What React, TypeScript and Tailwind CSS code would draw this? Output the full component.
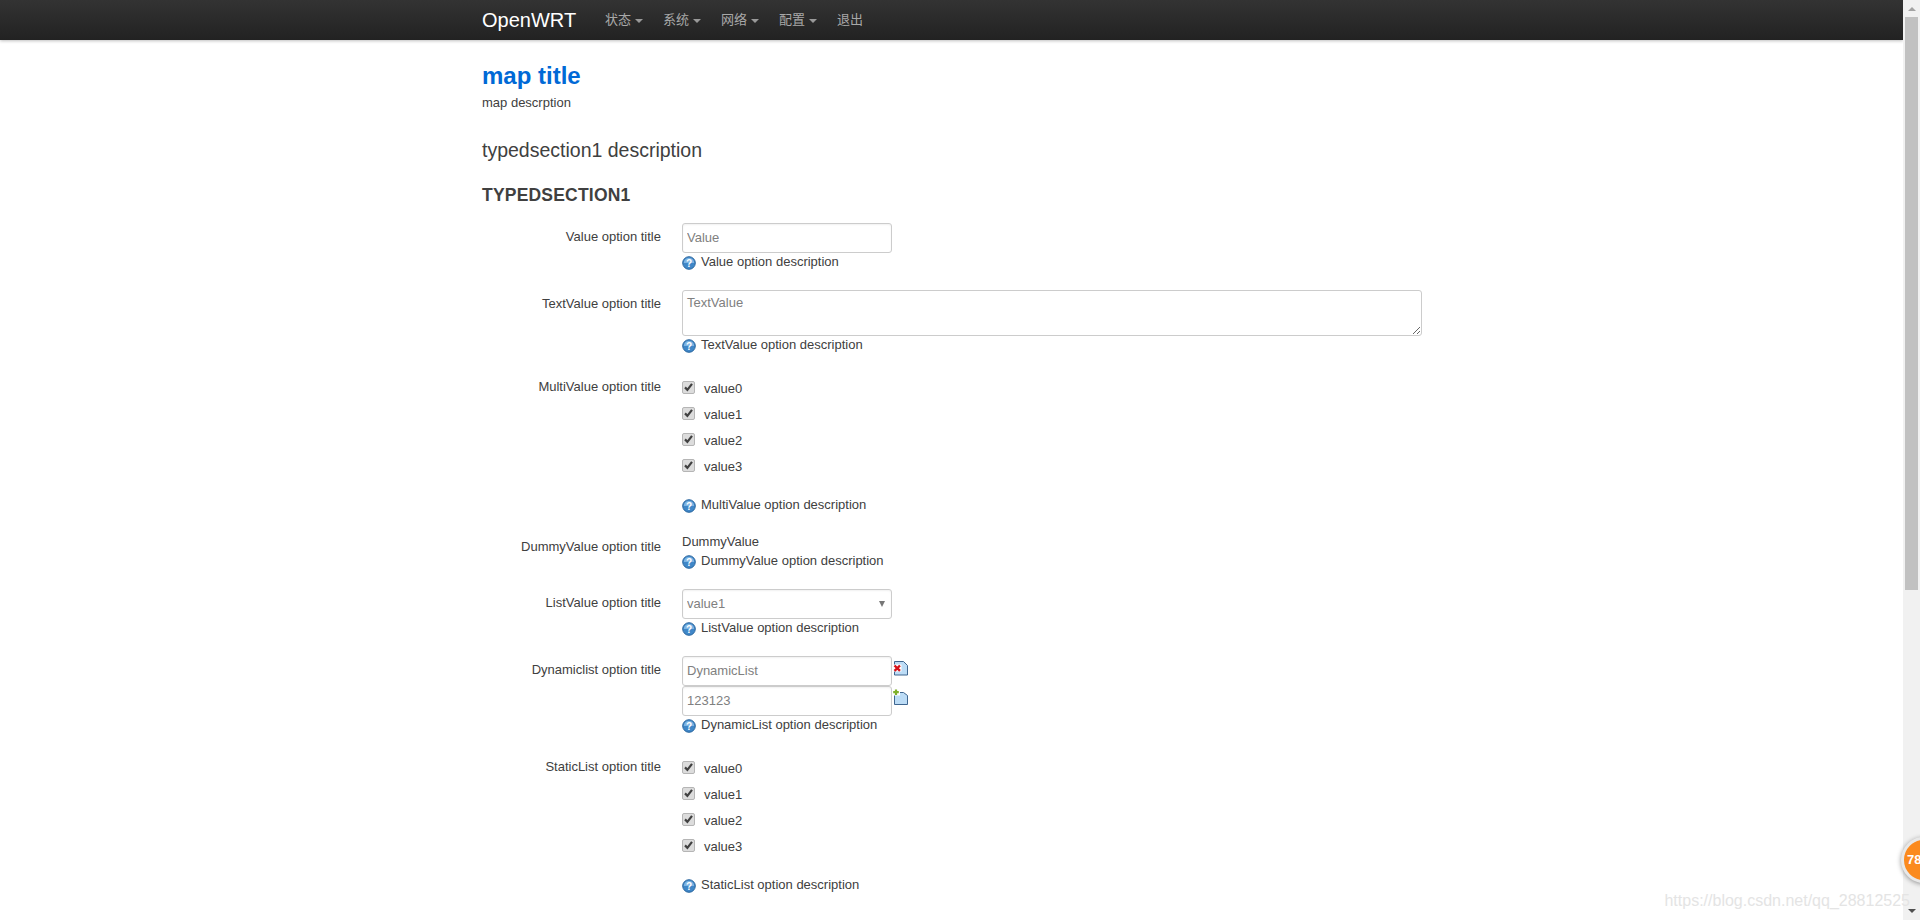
const sans = "font-['Liberation_Sans','Noto_Sans_CJK_SC',sans-serif]";

const HelpIcon = () => (
  <svg width="14" height="14" viewBox="0 0 14 14" className="mt-[1px] shrink-0">
    <circle cx="7" cy="7" r="6.3" fill="#3f87c8" stroke="#2c679f" strokeWidth="1" />
    <path d="M1.8 7a5.2 5.2 0 0 1 10.4 0z" fill="#7db4e3" />
    <text x="7" y="10.6" textAnchor="middle" fontSize="10" fontWeight="700" fill="#fff" fontFamily="Liberation Sans">
      ?
    </text>
  </svg>
);

const Help = ({ text }: { text: string }) => (
  <div className="flex h-[16px] items-center gap-[5px] text-[13px] leading-[16px]">
    <HelpIcon />
    <span>{text}</span>
  </div>
);

const Check = ({ label }: { label: string }) => (
  <div className="flex h-[26px] items-start">
    <span className="mt-[1px] flex h-[13px] w-[13px] items-center justify-center rounded-[2px] border border-[#b5b5b5] bg-[#dcdcdc]">
      <svg width="11" height="11" viewBox="0 0 11 11">
        <path d="M2 5.4 4.4 7.8 9 1.8" fill="none" stroke="#404040" strokeWidth="2.2" />
      </svg>
    </span>
    <span className="ml-[9px] mt-[1px] text-[13px] leading-[16px]">{label}</span>
  </div>
);

const Row = ({ label, labelClass, className, children }: { label: string; labelClass: string; className: string; children: React.ReactNode }) => (
  <div className={`flex ${className}`}>
    <label className={`w-[179px] shrink-0 text-right text-[13px] leading-[16px] ${labelClass}`}>{label}</label>
    <div className="ml-[21px] min-w-0 flex-1">{children}</div>
  </div>
);

const fieldCls =
  "block h-[30px] w-[210px] rounded-[3px] border border-[#ccc] bg-white px-[4px] text-[13px] text-[#808080] placeholder-[#808080] shadow-[inset_0_1px_2px_rgba(0,0,0,0.06)] outline-none";
const inputCls = `${fieldCls} pb-[2px]`;

const DeleteIcon = () => (
  <svg width="15" height="15" viewBox="0 0 15 15">
    <path d="M1.5.5h9l4 4v9.5h-13z" fill="#bcdcf6" stroke="#3f6690" />
    <path d="M0 3.5h8.5v7H0z" fill="#fff" />
    <path d="M1.5 4.5 7 9.8M7 4.5 1.5 9.8" stroke="#d5121a" strokeWidth="2.4" />
  </svg>
);

const AddIcon = () => (
  <svg width="15" height="16" viewBox="0 0 15 16">
    <path d="M1.5 3.5h9l4 3v9h-13z" fill="#bcdcf6" stroke="#3f6690" />
    <path d="M0 0h7v6.5H0z" fill="#fff" />
    <path d="M3 .5v5.5M.2 3.2h5.6" stroke="#7fb02a" strokeWidth="2.2" />
  </svg>
);

const Caret = () => <span className="ml-[4px] mt-[2px] h-0 w-0 border-x-[4px] border-t-[4px] border-x-transparent border-t-[#999]" />;

const navItems = ["状态", "系统", "网络", "配置"];
const values = ["value0", "value1", "value2", "value3"];

export default function App() {
  return (
    <div className={`relative flex h-[920px] overflow-hidden bg-white text-[#404040] ${sans}`}>
      <div className="min-w-0 flex-1">
        <header className="flex h-[40px] items-center bg-gradient-to-b from-[#333] to-[#222] pl-[482px] shadow-[0_1px_3px_rgba(0,0,0,0.25)]">
          <a className="w-[123px] text-[20px] leading-[20px] text-white">OpenWRT</a>
          <nav className="flex items-center text-[13px] text-[#a8a8a8]">
            {navItems.map((item) => (
              <span key={item} className="mr-[14px] flex w-[44px] items-center whitespace-nowrap">
                {item}
                <Caret />
              </span>
            ))}
            <span>退出</span>
          </nav>
        </header>

        <main className="pl-[482px]">
          <h2 className="mt-[22px] text-[24px] font-bold leading-[28px] text-[#0069d6]">map title</h2>
          <p className="mt-[5px] text-[13px] leading-[16px]">map descrption</p>
          <p className="mt-[27px] text-[19.5px] leading-[24px]">typedsection1 description</p>
          <h3 className="mt-[23px] text-[17.5px] font-bold uppercase leading-[20px] tracking-[0.2px]">typedsection1</h3>

          <Row label="Value option title" labelClass="mt-[6px]" className="mt-[18px]">
            <input className={inputCls} placeholder="Value" />
            <div className="mt-[1px]">
              <Help text="Value option description" />
            </div>
          </Row>

          <Row label="TextValue option title" labelClass="mt-[6px]" className="mt-[20px]">
            <textarea
              className="block h-[46px] w-[740px] rounded-[3px] border border-[#ccc] bg-white px-[4px] pb-[2px] pt-[3px] text-[13px] leading-[18px] text-[#808080] placeholder-[#808080] outline-none"
              placeholder="TextValue"
            />
            <div className="mt-[1px]">
              <Help text="TextValue option description" />
            </div>
          </Row>

          <Row label="MultiValue option title" labelClass="" className="mt-[26px]">
            <div className="pt-[1px]">
              {values.map((v) => (
                <Check key={v} label={v} />
              ))}
            </div>
            <div className="mt-[13px]">
              <Help text="MultiValue option description" />
            </div>
          </Row>

          <Row label="DummyValue option title" labelClass="mt-[5px]" className="mt-[21px]">
            <div className="text-[13px] leading-[16px]">DummyValue</div>
            <div className="mt-[3px]">
              <Help text="DummyValue option description" />
            </div>
          </Row>

          <Row label="ListValue option title" labelClass="mt-[6px]" className="mt-[20px]">
            <div className="relative w-[210px]">
              <select className={`${fieldCls} appearance-none`} defaultValue="value1">
                <option>value1</option>
              </select>
              <span className="absolute right-[7px] top-[12px] h-0 w-0 border-x-[3px] border-t-[6px] border-x-transparent border-t-[#777]" />
            </div>
            <div className="mt-[1px]">
              <Help text="ListValue option description" />
            </div>
          </Row>

          <Row label="Dynamiclist option title" labelClass="mt-[6px]" className="mt-[20px]">
            <div className="flex items-start">
              <input className={inputCls} placeholder="DynamicList" />
              <span className="ml-[1px] mt-[5px]">
                <DeleteIcon />
              </span>
            </div>
            <div className="flex items-start">
              <input className={inputCls} defaultValue="123123" />
              <span className="ml-[1px] mt-[3px]">
                <AddIcon />
              </span>
            </div>
            <div className="mt-[1px]">
              <Help text="DynamicList option description" />
            </div>
          </Row>

          <Row label="StaticList option title" labelClass="" className="mt-[26px]">
            <div className="pt-[1px]">
              {values.map((v) => (
                <Check key={v} label={v} />
              ))}
            </div>
            <div className="mt-[13px]">
              <Help text="StaticList option description" />
            </div>
          </Row>
        </main>
      </div>

      {/* scrollbar */}
      <div className="flex w-[17px] shrink-0 flex-col items-center bg-[#f1f1f1]">
        <span className="mt-[7px] h-0 w-0 border-x-[4px] border-b-[4px] border-x-transparent border-b-[#a3a3a3]" />
        <div className="mt-[6px] h-[573px] w-[13px] bg-[#c1c1c1]" />
        <span className="mt-auto mb-[7px] h-0 w-0 border-x-[4px] border-t-[4px] border-x-transparent border-t-[#505050]" />
      </div>

      {/* floating badge */}
      <div className="absolute left-[1901px] top-[837px] flex h-[46px] w-[46px] items-center rounded-full border-[3px] border-[#e8e8e8] bg-[#fb8a1e] pl-[3px] text-[13px] font-bold text-white shadow-[0_1px_5px_rgba(0,0,0,0.4)]">
        78
      </div>

      {/* watermark */}
      <div className="absolute right-[10px] top-[892px] text-[16px] leading-[18px] text-[#e4e4e4]">https://blog.csdn.net/qq_28812525</div>
    </div>
  );
}
